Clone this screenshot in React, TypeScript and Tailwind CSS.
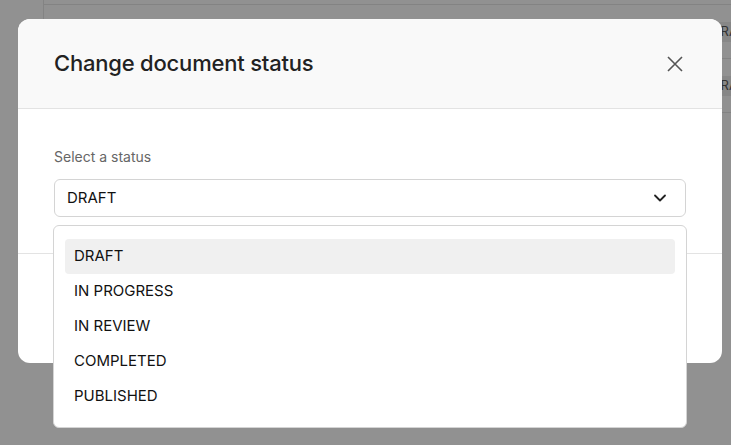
import { ChevronDown } from "lucide-react";

const statuses = ["DRAFT", "IN PROGRESS", "IN REVIEW", "COMPLETED", "PUBLISHED"];

export default function App() {
  return (
    <div
      className="relative w-[731px] h-[445px] overflow-hidden bg-[#919191]"
      style={{ fontFamily: "Inter, 'Noto Sans', sans-serif" }}
    >
      {/* Page behind the overlay */}
      <div className="absolute left-[43px] top-[-49px] w-[720px] border-l border-[#838383]">
        {[0, 1, 2].map((i) => (
          <div key={i} className="h-[54px] border-b border-[#838383] flex items-center justify-end">
            <span className="px-[9px] h-[20px] flex items-center bg-[#878787] text-[13px] text-[#333]">
              DRAFT
            </span>
          </div>
        ))}
      </div>

      {/* Modal */}
      <div className="absolute left-[18px] top-[19px] w-[704px] bg-white rounded-[12px] overflow-hidden">
        <div className="h-[90px] px-[36px] flex items-center justify-between bg-[#f9f9f9] border-b border-[#e3e3e3]">
          <h2 className="text-[22px] font-medium text-[#222] tracking-[-0.2px]">Change document status</h2>
          <svg width="16" height="16" viewBox="0 0 16 16" className="mr-[3px]">
            <path d="M1 1L15 15M15 1L1 15" stroke="#555" strokeWidth="1.6" fill="none" />
          </svg>
        </div>

        <div className="px-[36px] pt-[38px] pb-[36px] border-b border-[#e3e3e3]">
          <p className="text-[14px] leading-[20px] text-[#666] mb-[12px]">Select a status</p>
          <div className="h-[38px] border border-[#d4d4d4] rounded-[6px] flex items-center justify-between pl-[12px] pr-[15px]">
            <span className="text-[15px] text-[#111]">DRAFT</span>
            <ChevronDown size={20} strokeWidth={2.2} className="text-[#222]" />
          </div>
        </div>

        <div className="h-[109px] px-[36px] flex items-center justify-end gap-3">
          <button className="px-4 py-2 text-sm rounded-md border border-[#d4d4d4]">Cancel</button>
          <button className="px-4 py-2 text-sm rounded-md bg-[#222] text-white">Save</button>
        </div>
      </div>

      {/* Open dropdown */}
      <div className="absolute left-[53px] top-[225px] w-[634px] bg-white border border-[#d4d4d4] rounded-[6px] px-[11px] pt-[13px] pb-[13px]">
        {statuses.map((s, i) => (
          <div
            key={s}
            className={`h-[35px] pl-[9px] flex items-center rounded-[4px] text-[15px] text-[#111] ${
              i === 0 ? "bg-[#f0f0f0]" : ""
            }`}
          >
            {s}
          </div>
        ))}
      </div>
    </div>
  );
}
